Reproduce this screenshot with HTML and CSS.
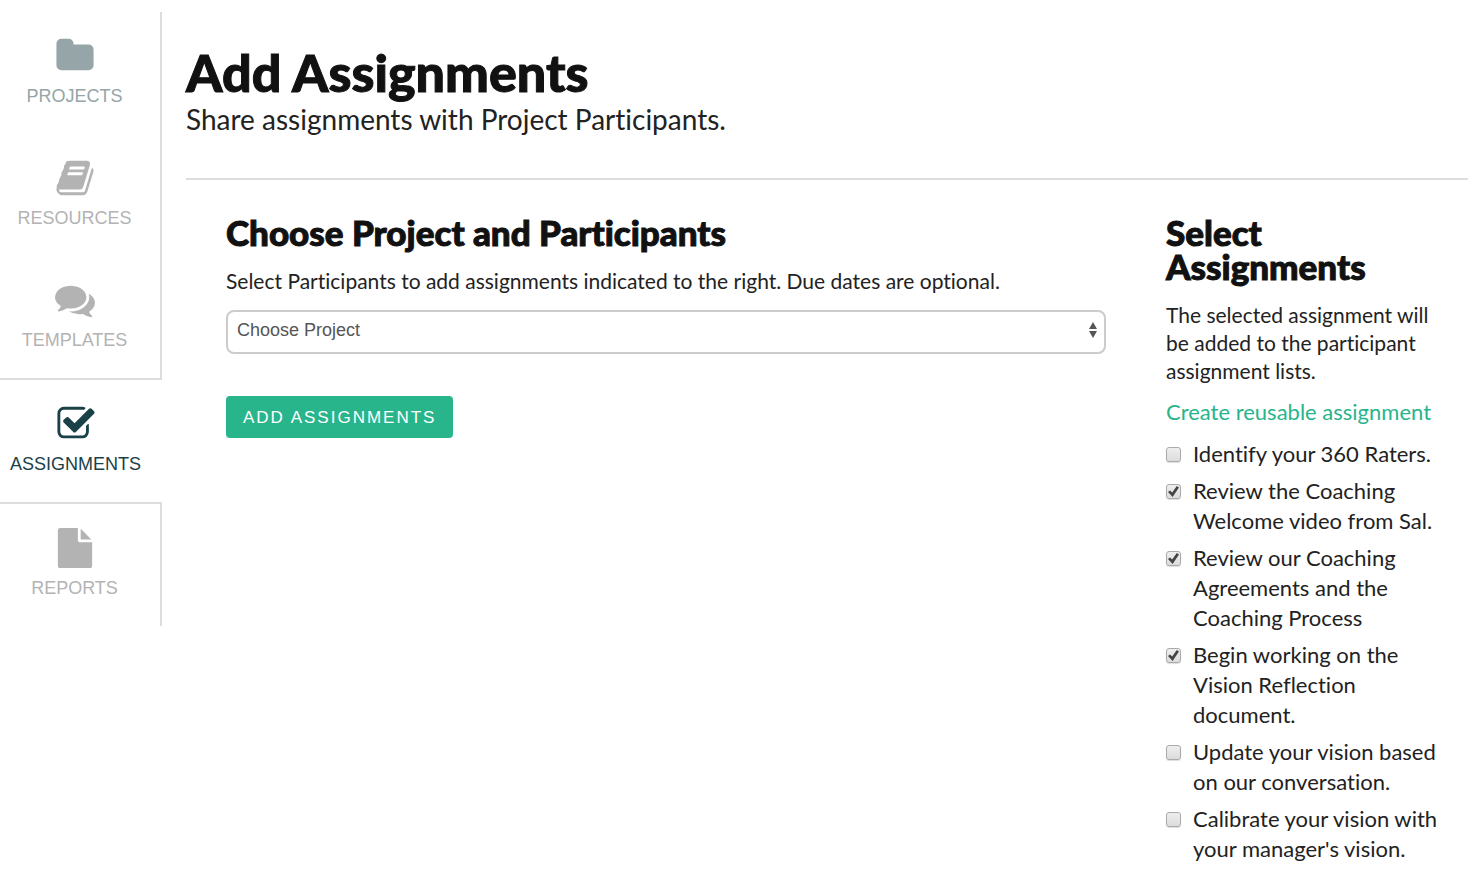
FILE: index.html
```html
<!DOCTYPE html>
<html lang="en">
<head>
  <meta charset="utf-8">
  <title>Add Assignments</title>
  <link rel="stylesheet" href="styles.css">
</head>
<body>

  <nav class="side-nav">
    <a href="#" class="nav-item projects">
      <svg viewBox="0 0 1792 1792"><path d="M1728 608v704q0 92-66 158t-158 66h-1216q-92 0-158-66t-66-158v-960q0-92 66-158t158-66h320q92 0 158 66t66 158v32h672q92 0 158 66t66 158z"/></svg>
      <span>PROJECTS</span>
    </a>
    <a href="#" class="nav-item">
      <svg viewBox="0 0 1792 1792"><path d="M1703 478q40 57 18 129l-275 906q-19 64-76.5 107.5t-122.5 43.5h-923q-77 0-148.5-53.5t-99.5-131.5q-24-67-2-127 0-4 3-27t4-37q1-8-3-21.5t-3-19.5q2-11 8-21t16.5-23.5 16.5-23.5q23-38 45-91.5t30-91.5q3-10 .5-30t-.5-28q3-11 17-28t17-23q21-36 42-92t25-90q1-9-2.5-32t.5-28q4-13 22-30.5t22-22.5q19-26 42.5-84.5t27.5-96.5q1-8-3-25.5t-2-26.5q2-8 9-18t18-23 17-21q8-12 16.5-30.5t15-35 16-36 19.5-32 26.5-23.5 36-11.5 47.5 5.5l-1 3q38-9 51-9h761q74 0 114 56t18 130l-274 906q-36 119-71.5 153.5t-128.5 34.5h-869q-27 0-38 15-11 16-1 43 24 70 144 70h923q29 0 56-15.5t35-41.5l300-987q7-22 5-57 38 15 59 43zm-1064 2q-4 13 2 22.5t20 9.5h608q13 0 25.5-9.5t16.5-22.5l21-64q4-13-2-22.5t-20-9.5h-608q-13 0-25.5 9.5t-16.5 22.5zm-83 256q-4 13 2 22.5t20 9.5h608q13 0 25.5-9.5t16.5-22.5l21-64q4-13-2-22.5t-20-9.5h-608q-13 0-25.5 9.5t-16.5 22.5z"/></svg>
      <span>RESOURCES</span>
    </a>
    <a href="#" class="nav-item">
      <svg viewBox="0 0 1792 1792"><path d="M1408 768q0 139-94 257t-256.5 186.5-353.5 68.5q-86 0-176-16-124 88-278 128-36 9-86 16h-3q-11 0-20.5-8t-11.5-21q-1-3-1-6.5t.5-6.5 2-6l2.5-5 3.5-5.5 4-5 4.5-5 4-4.5q5-6 23-25t26-29.5 22.5-29 25-38.5 20.5-44q-124-72-195-177t-71-224q0-139 94-257t256.5-186.5 353.5-68.5 353.5 68.5 256.5 186.5 94 257zm384 256q0 120-71 224.5t-195 176.5q10 24 20.5 44t25 38.5 22.5 29 26 29.5 23 25q1 1 4 4.5t4.5 5 4 5 3.5 5.5l2.5 5 2 6 .5 6.5-1 6.5q-3 14-13 22t-22 7q-50-7-86-16-154-40-278-128-90 16-176 16-271 0-472-132 58 4 88 4 161 0 309-45t264-129q125-92 192-212t67-254q0-77-23-152 129 71 204 178t75 230z"/></svg>
      <span>TEMPLATES</span>
    </a>
    <a href="#" class="nav-item active">
      <svg viewBox="0 0 1792 1792"><path d="M1472 930v318q0 119-84.5 203.5t-203.5 84.5h-832q-119 0-203.5-84.5t-84.5-203.5v-832q0-119 84.5-203.5t203.5-84.5h832q63 0 117 25 15 7 18 23 3 17-9 29l-49 49q-10 10-23 10-3 0-9-2-23-6-45-6h-832q-66 0-113 47t-47 113v832q0 66 47 113t113 47h832q66 0 113-47t47-113v-254q0-13 9-22l64-64q10-10 23-10 6 0 12 3 20 8 20 29zm231-489l-814 814q-24 24-57 24t-57-24l-430-430q-24-24-24-57t24-57l110-110q24-24 57-24t57 24l263 263 647-647q24-24 57-24t57 24l110 110q24 24 24 57t-24 57z"/></svg>
      <span>ASSIGNMENTS</span>
    </a>
    <a href="#" class="nav-item">
      <svg viewBox="0 0 1792 1792"><path d="M1152 512v-472q22 14 36 28l408 408q14 14 28 36h-472zm-128 32q0 40 28 68t68 28h544v1056q0 40-28 68t-68 28h-1344q-40 0-68-28t-28-68v-1600q0-40 28-68t68-28h800v544z"/></svg>
      <span>REPORTS</span>
    </a>
  </nav>

  <main>
    <header>
      <h1>Add Assignments</h1>
      <p>Share assignments with Project Participants.</p>
    </header>

    <form class="columns">
      <section class="choose">
        <h2>Choose Project and Participants</h2>
        <p><label for="project">Select Participants to add assignments indicated to the right. Due dates are optional.</label></p>
        <div class="select-wrap">
          <select id="project">
            <option>Choose Project</option>
          </select>
          <svg class="arrows" viewBox="0 0 10 18"><path d="M5 1l4 7H1zM5 17l4-7H1z"/></svg>
        </div>
        <button type="button">ADD ASSIGNMENTS</button>
      </section>

      <section class="assignments">
        <h2>Select Assignments</h2>
        <p>The selected assignment will be added to the participant assignment lists.</p>
        <a href="#" class="create">Create reusable assignment</a>
        <ul>
          <li><input type="checkbox" id="a1"><label for="a1">Identify your 360 Raters.</label></li>
          <li><input type="checkbox" id="a2" checked><label for="a2">Review the Coaching Welcome video from Sal.</label></li>
          <li><input type="checkbox" id="a3" checked><label for="a3">Review our Coaching Agreements and the Coaching Process</label></li>
          <li><input type="checkbox" id="a4" checked><label for="a4">Begin working on the Vision Reflection document.</label></li>
          <li><input type="checkbox" id="a5"><label for="a5">Update your vision based on our conversation.</label></li>
          <li><input type="checkbox" id="a6"><label for="a6">Calibrate your vision with your manager's vision.</label></li>
        </ul>
      </section>
    </form>
  </main>

</body>
</html>
```
FILE: styles.css
```css
* {
  box-sizing: border-box;
}

body {
  display: flex;
  align-items: flex-start;
  gap: 24px;
  margin: 0;
  padding: 12px 8px 0 0;
  background: #fff;
  color: #222;
  font-family: Lato, sans-serif;
  font-variant-ligatures: none;
}

h1, h2, p, ul {
  margin: 0;
  padding: 0;
}

h1, h2 {
  color: #111;
  font-weight: 900;
  -webkit-text-stroke: 1px #111;
}

/* left navigation */
.side-nav {
  flex: 0 0 162px;
  font-family: "Liberation Sans", sans-serif;
}

.nav-item {
  display: flex;
  flex-direction: column;
  align-items: center;
  gap: 9px;
  height: 122px;
  padding: 24px 11px 0 0;
  border-right: 2px solid #ddd;
  color: #b3b3b3;
  font-size: 18px;
  line-height: 22px;
  text-decoration: none;
}

.nav-item svg {
  width: 40px;
  height: 40px;
  fill: currentColor;
}

.nav-item.projects {
  color: #95a5a8;
}

.nav-item.active {
  height: 126px;
  border-right: 0;
  border-top: 2px solid #ddd;
  border-bottom: 2px solid #ddd;
  color: #1a4147;
}

/* content */
main {
  flex: 1;
}

header {
  padding: 31px 0 41px;
  border-bottom: 2px solid #ddd;
}

h1 {
  font-size: 52px;
  line-height: 58px;
}

header p {
  font-size: 28px;
  line-height: 36px;
}

.columns {
  display: grid;
  grid-template-columns: 1fr 280px;
  gap: 60px;
  padding: 35px 22px 0 40px;
}

h2 {
  font-size: 35px;
  line-height: 34px;
}

.columns p {
  margin-top: 18px;
  font-size: 21px;
  line-height: 28px;
}

.select-wrap {
  position: relative;
  margin-top: 15px;
}

select {
  display: block;
  width: 100%;
  height: 44px;
  padding: 0 40px 4px 9px;
  border: 2px solid #ccc;
  border-radius: 8px;
  background: #fff;
  color: #555;
  font-family: "Liberation Sans", sans-serif;
  font-size: 18px;
  appearance: none;
}

.arrows {
  position: absolute;
  top: 11px;
  right: 8px;
  width: 10px;
  height: 18px;
  fill: #555;
  pointer-events: none;
}

button {
  height: 42px;
  margin-top: 42px;
  padding: 2px 17px 0;
  border: 0;
  border-radius: 4px;
  background: #29b58b;
  color: #fff;
  font-family: "Liberation Sans", sans-serif;
  font-size: 17px;
  letter-spacing: 2px;
}

.create {
  display: block;
  margin-top: 12px;
  color: #29b58b;
  font-size: 22px;
  line-height: 30px;
  text-decoration: none;
}

ul {
  display: flex;
  flex-direction: column;
  gap: 7px;
  margin-top: 12px;
  list-style: none;
}

li {
  display: flex;
  align-items: flex-start;
  gap: 12px;
  font-size: 22px;
  line-height: 30px;
}

input[type="checkbox"] {
  flex: none;
  display: grid;
  place-items: center;
  width: 15px;
  height: 15px;
  margin: 8px 0 0;
  border: 1px solid #aaa;
  border-radius: 3px;
  background: linear-gradient(#eee, #dcdcdc);
  box-shadow: 0 1px 1px #ddd;
  appearance: none;
}

input[type="checkbox"]:checked::before {
  content: "";
  width: 11px;
  height: 11px;
  background: #444;
  clip-path: polygon(0 55%, 18% 40%, 38% 60%, 80% 0, 100% 14%, 42% 100%);
}
```
